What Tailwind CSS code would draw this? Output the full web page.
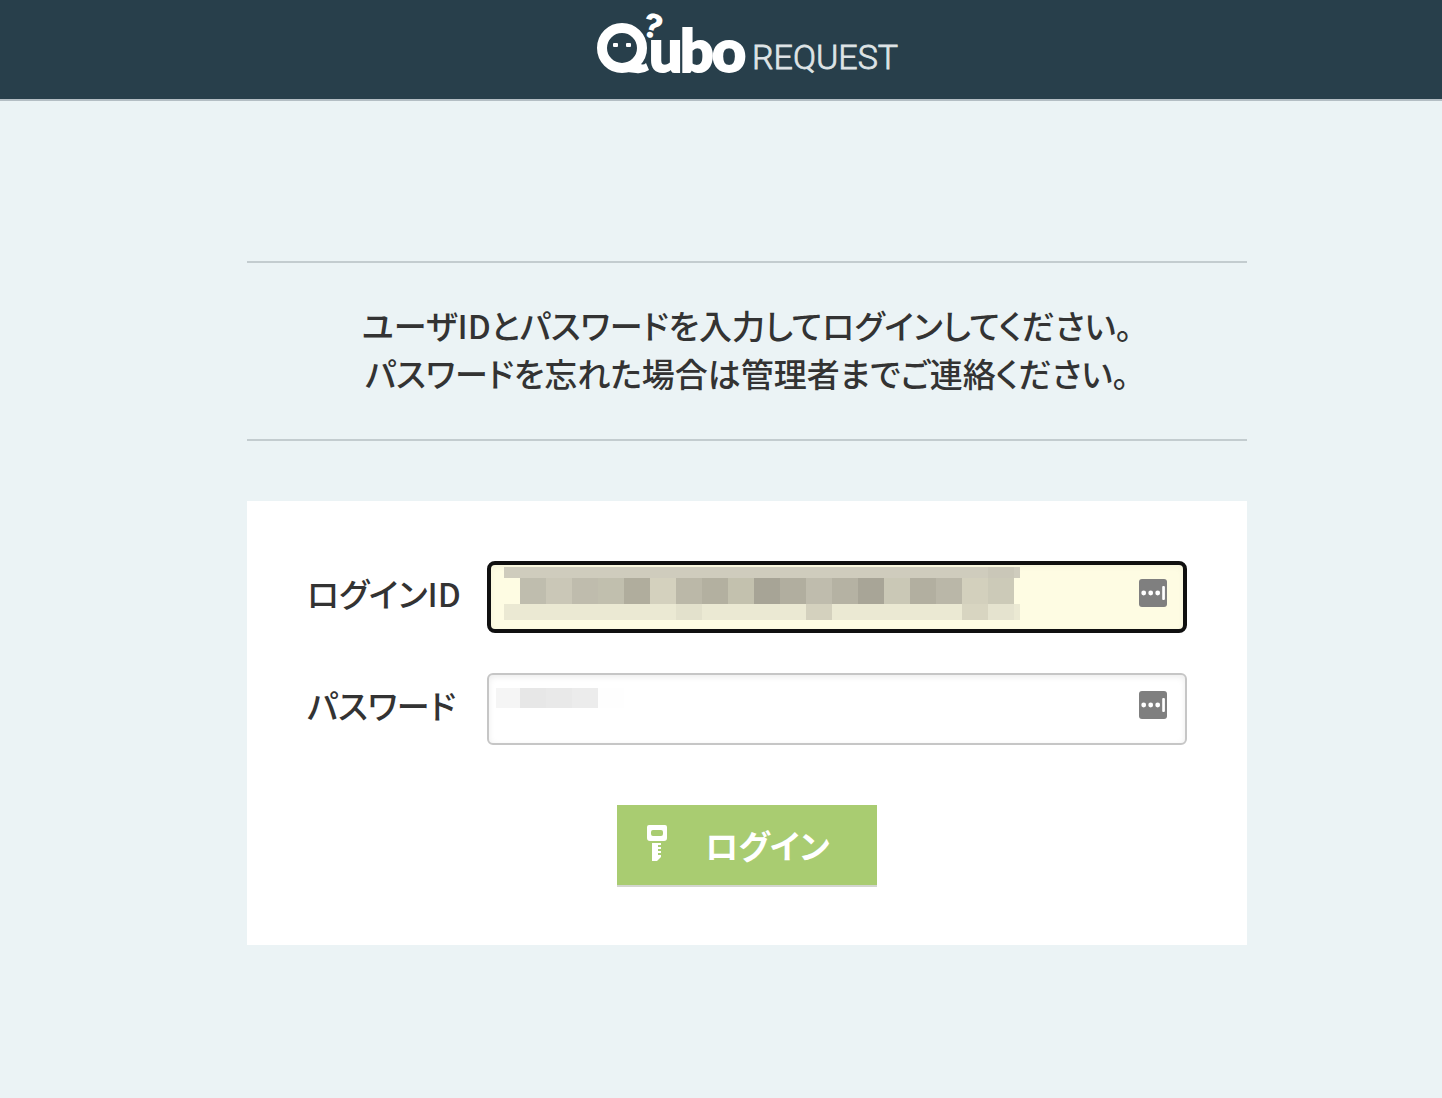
<!DOCTYPE html>
<html lang="ja">
<head>
    <meta charset="UTF-8">
    <meta name="viewport" content="width=device-width, initial-scale=1.0">
    <title>Qubo REQUEST</title>
    <script src="https://cdn.jsdelivr.net/npm/@tailwindcss/browser@4"></script>
</head>
<body class="min-h-screen bg-[#ebf3f5] text-[#333333] font-['Noto_Sans_CJK_JP',sans-serif] [font-feature-settings:'palt']">
<header class="flex justify-center h-[101px] pt-[15px] pl-[52px] bg-[#283f4b] border-b-2 border-[#b4bec4]">
    <a href="#" aria-label="Qubo REQUEST" class="block h-[60px]">
        <svg class="overflow-visible" width="300" height="60" viewBox="0 0 300 60" fill="#ffffff">
            <!-- face -->
            <circle cx="25" cy="33" r="20" fill="none" stroke="#ffffff" stroke-width="10"/>
            <path d="M33 51 L40 46 Q45 52 49 48 L52 55 Q46 59 39 58 L30 57 Z"/>
            <path d="M38 46 Q44 43 47 38" fill="none" stroke="#ffffff" stroke-width="4"/>
            <rect x="16" y="28" width="5" height="4" rx="1"/>
            <rect x="29" y="28" width="5" height="4" rx="1"/>
            <text x="46" y="23" font-family="Inter" font-weight="800" font-size="33" transform="rotate(14 56 12)">?</text>
            <text x="52 83 115" y="57" font-family="Lato" font-weight="900" font-size="59" stroke="#ffffff" stroke-width="2">ubo</text>
            <text x="155" y="54" font-family="Roboto" font-weight="300" font-size="34" fill="#dfe4e6" stroke="#dfe4e6" stroke-width="0.8">REQUEST</text>
        </svg>
    </a>
</header>

<main class="pt-40 pb-20 pl-[52px]">
    <div class="max-w-[1000px] mx-auto">
        <div class="pt-[38px] pb-[42px] mb-[60px] border-y-2 border-[#c3cccf] text-center">
            <p class="text-[33px] leading-[48px] font-medium">
                ユーザIDとパスワードを入力してログインしてください。<br>
                パスワードを忘れた場合は管理者までご連絡ください。
            </p>
        </div>

        <form class="bg-white px-[60px] pt-[60px] pb-[58px]">
            <div class="flex items-center mb-10">
                <label for="loginId" class="w-[180px] pb-2 text-[33px] leading-[48px] font-medium">ログインID</label>
                <div class="relative flex-1">
                    <input type="text" id="loginId"
                           class="block w-full h-[72px] px-4 text-[32px] bg-[#fefce3] border-4 border-[#101010] rounded-lg shadow-[inset_0_2px_6px_rgba(0,0,0,0.04)] focus:outline-none">
                    <!-- masked value -->
                    <svg class="absolute left-[17px] top-[6px]" width="516" height="53" viewBox="0 0 516 53" shape-rendering="crispEdges">
                        <path fill="#cfccbd" d="M0 0h516v11H0z"/>
                        <path fill="#cac7b8" d="M484 0h26v11h-26z"/>
                        <path fill="#bfbdae" d="M16 11h26v26H16z"/>
                        <path fill="#cac7b7" d="M42 11h26v26H42z"/>
                        <path fill="#bfbcad" d="M68 11h26v26H68z"/>
                        <path fill="#c1bfae" d="M94 11h26v26H94z"/>
                        <path fill="#b0ad9d" d="M120 11h26v26h-26z"/>
                        <path fill="#d4d1be" d="M146 11h26v26h-26z"/>
                        <path fill="#bbb8a8" d="M172 11h26v26h-26z"/>
                        <path fill="#b3b0a0" d="M198 11h26v26h-26z"/>
                        <path fill="#c3c1ae" d="M224 11h26v26h-26z"/>
                        <path fill="#a7a496" d="M250 11h26v26h-26z"/>
                        <path fill="#b1ae9f" d="M276 11h26v26h-26z"/>
                        <path fill="#bfbcad" d="M302 11h26v26h-26z"/>
                        <path fill="#b5b2a3" d="M328 11h26v26h-26z"/>
                        <path fill="#a8a597" d="M354 11h26v26h-26z"/>
                        <path fill="#cac8b6" d="M380 11h26v26h-26z"/>
                        <path fill="#b2afa0" d="M406 11h26v26h-26z"/>
                        <path fill="#bab7a8" d="M432 11h26v26h-26z"/>
                        <path fill="#d3d0bd" d="M458 11h26v26h-26z"/>
                        <path fill="#cccab8" d="M484 11h26v26h-26z"/>
                        <path fill="#ebe9d3" d="M0 37h516v16H0z"/>
                        <path fill="#e3e1cc" d="M172 37h26v16h-26z"/>
                        <path fill="#d4d1be" d="M302 37h26v16h-26z"/>
                        <path fill="#d8d5c1" d="M458 37h26v16h-26z"/>
                        <path fill="#e5e3cf" d="M484 37h26v16h-26z"/>
                    </svg>
                    <svg class="absolute right-5 top-[18px]" width="28" height="28" viewBox="0 0 28 28">
                        <rect width="28" height="28" rx="3" fill="#7f7f7f"/>
                        <g fill="#ffffff">
                            <circle cx="4.7" cy="14" r="2.4"/>
                            <circle cx="11.7" cy="14" r="2.4"/>
                            <circle cx="18.7" cy="14" r="2.4"/>
                            <rect x="23.2" y="7" width="2.7" height="14" rx="1"/>
                        </g>
                    </svg>
                </div>
            </div>

            <div class="flex items-center mb-[60px]">
                <label for="password" class="w-[180px] pb-2 text-[33px] leading-[48px] font-medium">パスワード</label>
                <div class="relative flex-1">
                    <input type="password" id="password"
                           class="block w-full h-[72px] px-4 text-[32px] bg-white border-2 border-[#c6c6c6] rounded-md shadow-[inset_0_2px_6px_rgba(0,0,0,0.08)] focus:outline-none">
                    <!-- masked value -->
                    <svg class="absolute left-[9px] top-[15px]" width="128" height="20" viewBox="0 0 128 20" shape-rendering="crispEdges">
                        <path fill="#f5f5f5" d="M0 0h24v20H0z"/>
                        <path fill="#e7e7e7" d="M24 0h26v20H24z"/>
                        <path fill="#e9e9e9" d="M50 0h26v20H50z"/>
                        <path fill="#ececec" d="M76 0h26v20H76z"/>
                        <path fill="#fefefe" d="M102 0h26v20h-26z"/>
                    </svg>
                    <svg class="absolute right-5 top-[18px]" width="28" height="28" viewBox="0 0 28 28">
                        <rect width="28" height="28" rx="3" fill="#7f7f7f"/>
                        <g fill="#ffffff">
                            <circle cx="4.7" cy="14" r="2.4"/>
                            <circle cx="11.7" cy="14" r="2.4"/>
                            <circle cx="18.7" cy="14" r="2.4"/>
                            <rect x="23.2" y="7" width="2.7" height="14" rx="1"/>
                        </g>
                    </svg>
                </div>
            </div>

            <button type="button" class="flex items-center gap-[38px] w-[260px] h-[82px] mx-auto pl-[30px] bg-[#a9cc71] border-b-2 border-[#d3d6cf] text-white text-[33px] leading-[48px] font-bold cursor-pointer">
                <svg class="mb-1" width="20" height="36" viewBox="0 0 20 36" fill="#ffffff">
                    <path fill-rule="evenodd" d="M2 0H18Q20 0 20 2V13Q20 16 17 16H3Q0 16 0 13V2Q0 0 2 0ZM6 5Q4 5 4 7V9Q4 11 6 11H14Q16 11 16 9V7Q16 5 14 5Z"/>
                    <path d="M5 18H14V20H11V22H14V24H11V26H14V28H11V30H14V32L10 36H5Z"/>
                </svg>
                <span>ログイン</span>
            </button>
        </form>
    </div>
</main>
</body>
</html>
